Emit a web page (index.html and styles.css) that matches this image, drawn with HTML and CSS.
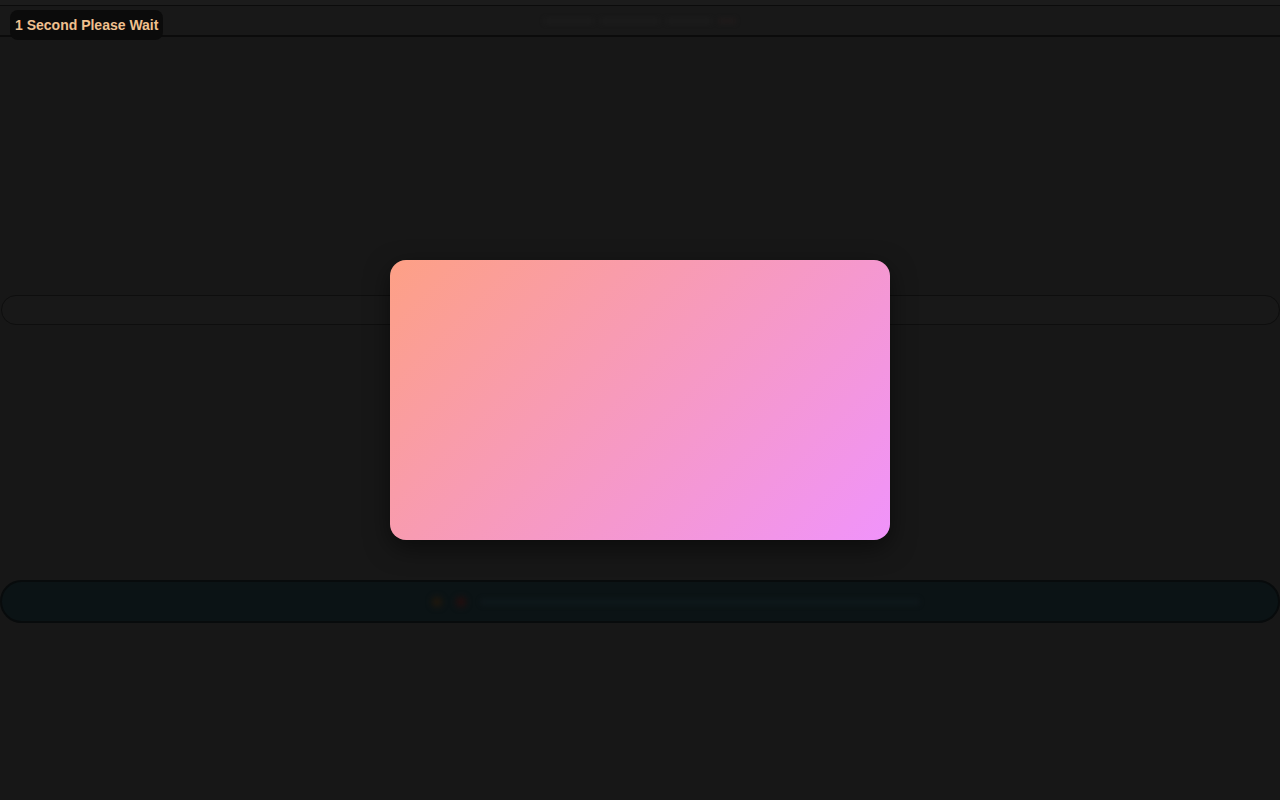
FILE: index.html
```html
<!DOCTYPE html>
<html lang="en">
<head>
<meta charset="utf-8">
<title>1 Second Please Wait</title>
<link rel="stylesheet" href="styles.css">
</head>
<body>
<div class="page">
  <div class="top-strip"></div>
  <header class="header">
    <div class="header-ghost"><span class="ghost g1"></span><span class="ghost g2"></span><span class="ghost g3"></span><span class="ghost g4"></span></div>
  </header>
  <div class="hero"></div>
  <div class="search-bar"></div>
  <div class="gap"></div>
  <div class="notice-bar">
    <span class="dot dot-orange"></span>
    <span class="dot dot-red"></span>
    <span class="ghost-line"></span>
  </div>
</div>

<div class="wait-badge">1 Second Please Wait</div>
<div class="gradient-card"></div>
</body>
</html>
```

FILE: styles.css
```css
* { box-sizing: border-box; }

html, body {
  margin: 0;
  padding: 0;
  height: 100%;
}

body {
  background: #171717;
  font-family: "Liberation Sans", Arial, sans-serif;
  overflow: hidden;
}

.page {
  display: flex;
  flex-direction: column;
  width: 1280px;
  height: 800px;
}

.top-strip {
  height: 6px;
  background: #1b1b1b;
  border-bottom: 1px solid #0b0b0b;
}

.header {
  height: 31px;
  background: #181818;
  border-bottom: 2px solid #0b0b0b;
  display: flex;
  align-items: center;
  justify-content: center;
}

.header-ghost {
  display: flex;
  gap: 6px;
  align-items: center;
  filter: blur(2px);
}

.ghost {
  display: block;
  height: 6px;
  background: #1b1b1b;
  border-radius: 3px;
}
.g1 { width: 50px; }
.g2 { width: 60px; }
.g3 { width: 46px; }
.g4 { width: 18px; background: #1e1a1a; }

.hero {
  height: 258px;
}

.search-bar {
  height: 30px;
  margin: 0 0 0 1px;
  background: #181818;
  border: 1px solid #0e0e0e;
  border-radius: 15px;
}

.gap {
  height: 255px;
}

.notice-bar {
  height: 43px;
  background: #0b1315;
  border: 2px solid #080b0c;
  border-radius: 22px;
  display: flex;
  align-items: center;
  padding-left: 430px;
  gap: 14px;
}

.dot {
  width: 10px;
  height: 10px;
  border-radius: 50%;
  filter: blur(3px);
}
.dot-orange { background: #22180c; }
.dot-red { background: #250e0e; }

.ghost-line {
  width: 440px;
  height: 8px;
  background: #0e171a;
  border-radius: 4px;
  filter: blur(2px);
}

.wait-badge {
  position: fixed;
  top: 10px;
  left: 10px;
  height: 30px;
  padding: 0 5px;
  display: flex;
  align-items: center;
  background: #0b0b0b;
  color: #f0c08f;
  font-weight: bold;
  font-size: 14px;
  border-radius: 8px;
}

.gradient-card {
  position: fixed;
  top: 260px;
  left: 390px;
  width: 500px;
  height: 280px;
  border-radius: 16px;
  background: linear-gradient(135deg, #fda085 0%, #f093fb 100%);
  box-shadow: 0 8px 24px rgba(0, 0, 0, 0.5);
}
```
